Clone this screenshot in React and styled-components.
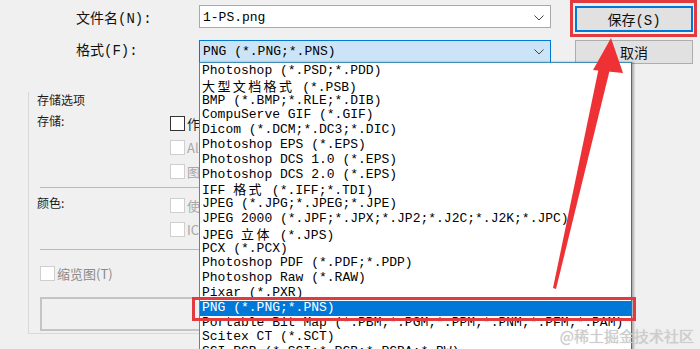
import React from 'react'
import styled, { createGlobalStyle } from 'styled-components'

const GlobalStyle = createGlobalStyle`
  body { margin: 0; background: #f0f0f0; }
`

const FORMATS = [
  'Photoshop (*.PSD;*.PDD)',
  '大型文档格式 (*.PSB)',
  'BMP (*.BMP;*.RLE;*.DIB)',
  'CompuServe GIF (*.GIF)',
  'Dicom (*.DCM;*.DC3;*.DIC)',
  'Photoshop EPS (*.EPS)',
  'Photoshop DCS 1.0 (*.EPS)',
  'Photoshop DCS 2.0 (*.EPS)',
  'IFF 格式 (*.IFF;*.TDI)',
  'JPEG (*.JPG;*.JPEG;*.JPE)',
  'JPEG 2000 (*.JPF;*.JPX;*.JP2;*.J2C;*.J2K;*.JPC)',
  'JPEG 立体 (*.JPS)',
  'PCX (*.PCX)',
  'Photoshop PDF (*.PDF;*.PDP)',
  'Photoshop Raw (*.RAW)',
  'Pixar (*.PXR)',
  'PNG (*.PNG;*.PNS)',
  'Portable Bit Map (*.PBM;*.PGM;*.PPM;*.PNM;*.PFM;*.PAM)',
  'Scitex CT (*.SCT)',
  'SGI RGB (*.SGI;*.RGB;*.RGBA;*.BW)',
]
const SELECTED = 16

const Window = styled.div`
  position: relative;
  width: 700px;
  height: 349px;
  overflow: hidden;
  background: #f0f0f0;
  color: #000;
  font-family: "Liberation Mono", "Noto Sans CJK SC", monospace;
`

const Header = styled.div`
  display: grid;
  grid-template-columns: 199px 352px 142px;
  row-gap: 8px;
  padding-top: 5px;
`

const Label = styled.div`
  padding-left: 76px;
  margin-top: ${(p) => p.$top || 0}px;
  font-size: 14px;
  line-height: 23px;
  color: #111;
`

const Field = styled.div`
  box-sizing: border-box;
  height: 23px;
  display: flex;
  align-items: center;
  justify-content: space-between;
  padding: ${(p) => (p.$active ? '0' : '2px')} 6px 0 3px;
  border: 1px solid ${(p) => (p.$active ? '#0078d7' : '#a9a9a9')};
  background: ${(p) => (p.$active ? '#cce4f7' : '#fff')};
  font-size: 13px;
`

const Button = styled.div`
  box-sizing: border-box;
  width: 118px;
  height: ${(p) => (p.$default ? 26 : 24)}px;
  margin: ${(p) => (p.$default ? 1 : 0)}px 0 0 24px;
  display: flex;
  align-items: center;
  justify-content: center;
  background: #e1e1e1;
  border: ${(p) => (p.$default ? '2px solid #0078d7' : '1px solid #adadad')};
  font-size: 14px;
  color: #111;
`

const Group = styled.div`
  margin: 36px 0 0 28px;
  width: 560px;
  height: 242px;
  box-sizing: border-box;
  border-left: 1px solid #d9d9d9;
  border-bottom: 1px solid #d9d9d9;
  padding-left: 8px;
  font-family: "Noto Sans CJK SC", sans-serif;
  font-size: 12px;
`

const GroupTitle = styled.div`
  margin-top: -8px;
  line-height: 16px;
  color: #1a1a1a;
`

const Section = styled.div`
  display: flex;
  margin-top: ${(p) => p.$top}px;
`

const SectionLabel = styled.div`
  width: 133px;
  flex: none;
  line-height: 20px;
  color: #1a1a1a;
`

const Rows = styled.div`
  display: flex;
  flex-direction: column;
`

const CheckRow = styled.div`
  display: flex;
  align-items: center;
  height: 24px;
  gap: 2px;
  color: ${(p) => (p.$off ? '#a8a8a8' : '#1a1a1a')};
  font-size: 13px;
  white-space: nowrap;
`

const Box = styled.span`
  box-sizing: border-box;
  width: 15px;
  height: 15px;
  background: #fff;
  border: 1px solid ${(p) => (p.$off ? '#cfcfcf' : '#333')};
`

const Rule = styled.div`
  height: 1px;
  margin: ${(p) => p.$top}px 0 0 3px;
  background: #b9b9b9;
`

const Thumb = styled(CheckRow)`
  margin: 11px 0 0 3px;
  color: #8a8a8a;
`

const Preview = styled.div`
  margin: 12px 0 0 3px;
  height: 34px;
  box-sizing: border-box;
  border: 2px solid #c4c4c4;
  background: #f0f0f0;
`

const DropList = styled.ul`
  position: absolute;
  left: 199px;
  top: 62px;
  width: 433px;
  height: 300px;
  box-sizing: border-box;
  margin: 0;
  padding: 1px 0 0;
  list-style: none;
  background: #fff;
  border: 1px solid #3f8fb7;
  border-right-color: #1f7f8c;
  box-shadow: 2px 0 2px rgba(0, 0, 0, 0.28);
  font-size: 13px;
`

const Item = styled.li`
  height: 14.8px;
  line-height: 14.8px;
  padding-left: 2px;
  white-space: nowrap;
  background: ${(p) => (p.$on ? '#0078d7' : 'transparent')};
  color: ${(p) => (p.$on ? '#fff' : '#000')};
`

const Cjk = styled.span`
  font-family: "Noto Sans CJK SC", sans-serif;
  letter-spacing: 2.4px;
`

const Mark = styled.div`
  position: absolute;
  left: ${(p) => p.$x}px;
  top: ${(p) => p.$y}px;
  width: ${(p) => p.$w}px;
  height: ${(p) => p.$h}px;
  box-sizing: border-box;
  border: 3px solid #e23b3f;
  pointer-events: none;
`

const Overlay = styled.svg`
  position: absolute;
  left: 0;
  top: 0;
  pointer-events: none;
`

const Watermark = styled.div`
  position: absolute;
  right: 6px;
  bottom: 3px;
  font-family: "Noto Sans CJK SC", sans-serif;
  font-size: 15px;
  color: #cdcdcd;
  text-shadow: 0 0 1px rgba(120, 120, 120, 0.35);
`

function Mixed({ text }) {
  return text.split(/([\u4e00-\u9fff]+)/).map((part, i) =>
    /[\u4e00-\u9fff]/.test(part) ? <Cjk key={i}>{part}</Cjk> : part
  )
}

function Chevron() {
  return (
    <svg width="10" height="6" viewBox="0 0 10 6">
      <polyline points="0.5,0.5 5,5 9.5,0.5" fill="none" stroke="#444" strokeWidth="1" />
    </svg>
  )
}

export default function App() {
  return (
    <Window>
      <GlobalStyle />
      <Header>
        <Label $top={3}>文件名(N):</Label>
        <Field>
          <span>1-PS.png</span>
          <Chevron />
        </Field>
        <Button $default>保存(S)</Button>

        <Label>格式(F):</Label>
        <Field $active>
          <span>PNG (*.PNG;*.PNS)</span>
          <Chevron />
        </Field>
        <Button>取消</Button>
      </Header>

      <Group>
        <GroupTitle>存储选项</GroupTitle>
        <Section $top={3}>
          <SectionLabel>存储:</SectionLabel>
          <Rows>
            <CheckRow><Box />作为副本(Y)</CheckRow>
            <CheckRow $off><Box $off />Alpha 通道(A)</CheckRow>
            <CheckRow $off><Box $off />图层(L)</CheckRow>
          </Rows>
        </Section>
        <Rule $top={4} />
        <Section $top={5}>
          <SectionLabel>颜色:</SectionLabel>
          <Rows>
            <CheckRow $off><Box $off />使用校样设置(O)</CheckRow>
            <CheckRow $off><Box $off />ICC 配置文件(C)</CheckRow>
          </Rows>
        </Section>
        <Rule $top={8} />
        <Thumb $off><Box $off />缩览图(T)</Thumb>
        <Preview />
      </Group>

      <DropList>
        {FORMATS.map((f, i) => (
          <Item key={f} $on={i === SELECTED}>
            <Mixed text={f} />
          </Item>
        ))}
      </DropList>

      <Mark $x={570} $y={0} $w={127} $h={37} />
      <Mark $x={192} $y={297} $w={444} $h={24} />

      <Overlay width="700" height="349" viewBox="0 0 700 349">
        <polygon points="611,38 593,70 623,73" fill="#ee3135" />
        <polygon points="599,67 610,69 556,289 553,288" fill="#ee3135" />
      </Overlay>

      <Watermark>@稀土掘金技术社区</Watermark>
    </Window>
  )
}
